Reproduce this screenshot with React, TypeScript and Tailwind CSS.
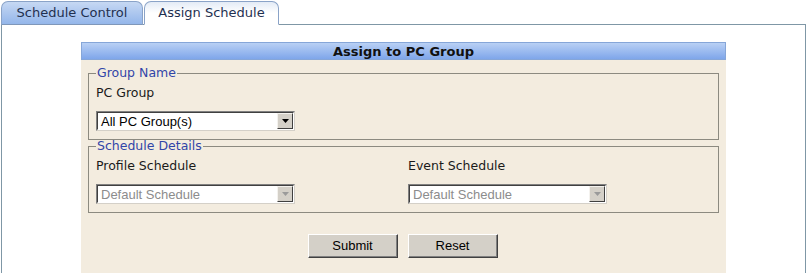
import { useState } from 'react'

function Select({ value, disabled }: { value: string; disabled?: boolean }) {
  return (
    <div className="flex h-[20px] w-[199px] border border-t-[#808080] border-l-[#808080] border-b-[#d4d0c8] border-r-[#d4d0c8] bg-white">
      <div className="flex flex-1 border border-t-[#404040] border-l-[#404040] border-b-white border-r-white">
        <span
          className={`flex-1 truncate pl-[3px] pt-[1px] font-['Liberation_Sans',Arial,sans-serif] text-[13px] leading-[15px] ${
            disabled ? 'text-[#8c8c8c]' : 'text-black'
          }`}
        >
          {value}
        </span>
        <span className="flex w-[16px] items-center justify-center border border-t-[#f4f2ee] border-l-[#f4f2ee] border-b-[#404040] border-r-[#404040] bg-[#d4d0c8]">
          <svg width="7" height="4" viewBox="0 0 7 4">
            <path d="M0 0h7L3.5 4z" fill={disabled ? '#9a9a9a' : '#000'} />
          </svg>
        </span>
      </div>
    </div>
  )
}

function Btn({ label }: { label: string }) {
  return (
    <button className="h-[24px] w-[90px] border border-t-white border-l-white border-b-[#404040] border-r-[#404040] bg-[#d4d0c8] font-['Liberation_Sans',Arial,sans-serif] text-[13px] text-black shadow-[inset_-1px_-1px_0_#808080]">
      {label}
    </button>
  )
}

export default function App() {
  const [tab, setTab] = useState(1)
  const tabs = ['Schedule Control', 'Assign Schedule']

  return (
    <div className="h-[273px] w-[808px] overflow-hidden bg-white pl-[1px] pt-[1px] font-['DejaVu_Sans',Tahoma,sans-serif]">
      <div className="flex h-[23px] items-end">
        {tabs.map((t, i) => (
          <button
            key={t}
            onClick={() => setTab(i)}
            className={`relative z-10 -mb-px flex h-[24px] items-center justify-center rounded-t-[7px] border border-[#8aa3c8] text-[13px] text-[#1f3050] ${
              i === 0 ? 'w-[142px]' : 'ml-[1px] w-[135px]'
            } ${
              tab === i
                ? 'border-b-white bg-gradient-to-b from-[#e3ebf6] via-white to-white'
                : 'border-b-[#7f97b9] bg-gradient-to-b from-[#c6d8f3] to-[#94b6ea]'
            }`}
          >
            {t}
          </button>
        ))}
      </div>

      <div className="h-[260px] w-[805px] border border-[#7f97a6] pl-[79px] pt-[17px]">
        <div className="w-[645px]">
          <div className="flex h-[18px] items-center justify-center border border-[#86a6d8] bg-gradient-to-b from-[#b9d0f4] to-[#7fa6ea] pt-[1px] text-[13px] font-bold text-[#111]">
            Assign to PC Group
          </div>

          <div className="h-[230px] bg-[#f3ecdf] px-[7px] pt-[6px]">
            <fieldset className="h-[74px] border border-[#8c8a80] pl-[7px] pr-[8px]">
              <legend className="px-[1px] text-[12.5px] leading-[14px] text-[#3145a8]">Group Name</legend>
              <div className="mt-[5px] text-[12.5px] leading-[16px] text-[#1a1a1a]">PC Group</div>
              <div className="mt-[10px]">
                <Select value="All PC Group(s)" />
              </div>
            </fieldset>

            <fieldset className="mt-[-1px] h-[74px] border border-[#8c8a80] pl-[7px] pr-[8px]">
              <legend className="px-[1px] text-[12.5px] leading-[14px] text-[#3145a8]">Schedule Details</legend>
              <div className="flex">
                <div className="w-[312px]">
                  <div className="mt-[5px] text-[12.5px] leading-[16px] text-[#1a1a1a]">Profile Schedule</div>
                  <div className="mt-[10px]">
                    <Select value="Default Schedule" disabled />
                  </div>
                </div>
                <div>
                  <div className="mt-[5px] text-[12.5px] leading-[16px] text-[#1a1a1a]">Event Schedule</div>
                  <div className="mt-[10px]">
                    <Select value="Default Schedule" disabled />
                  </div>
                </div>
              </div>
            </fieldset>

            <div className="mt-[21px] flex justify-center gap-[10px] pr-[2px]">
              <Btn label="Submit" />
              <Btn label="Reset" />
            </div>
          </div>
        </div>
      </div>
    </div>
  )
}
